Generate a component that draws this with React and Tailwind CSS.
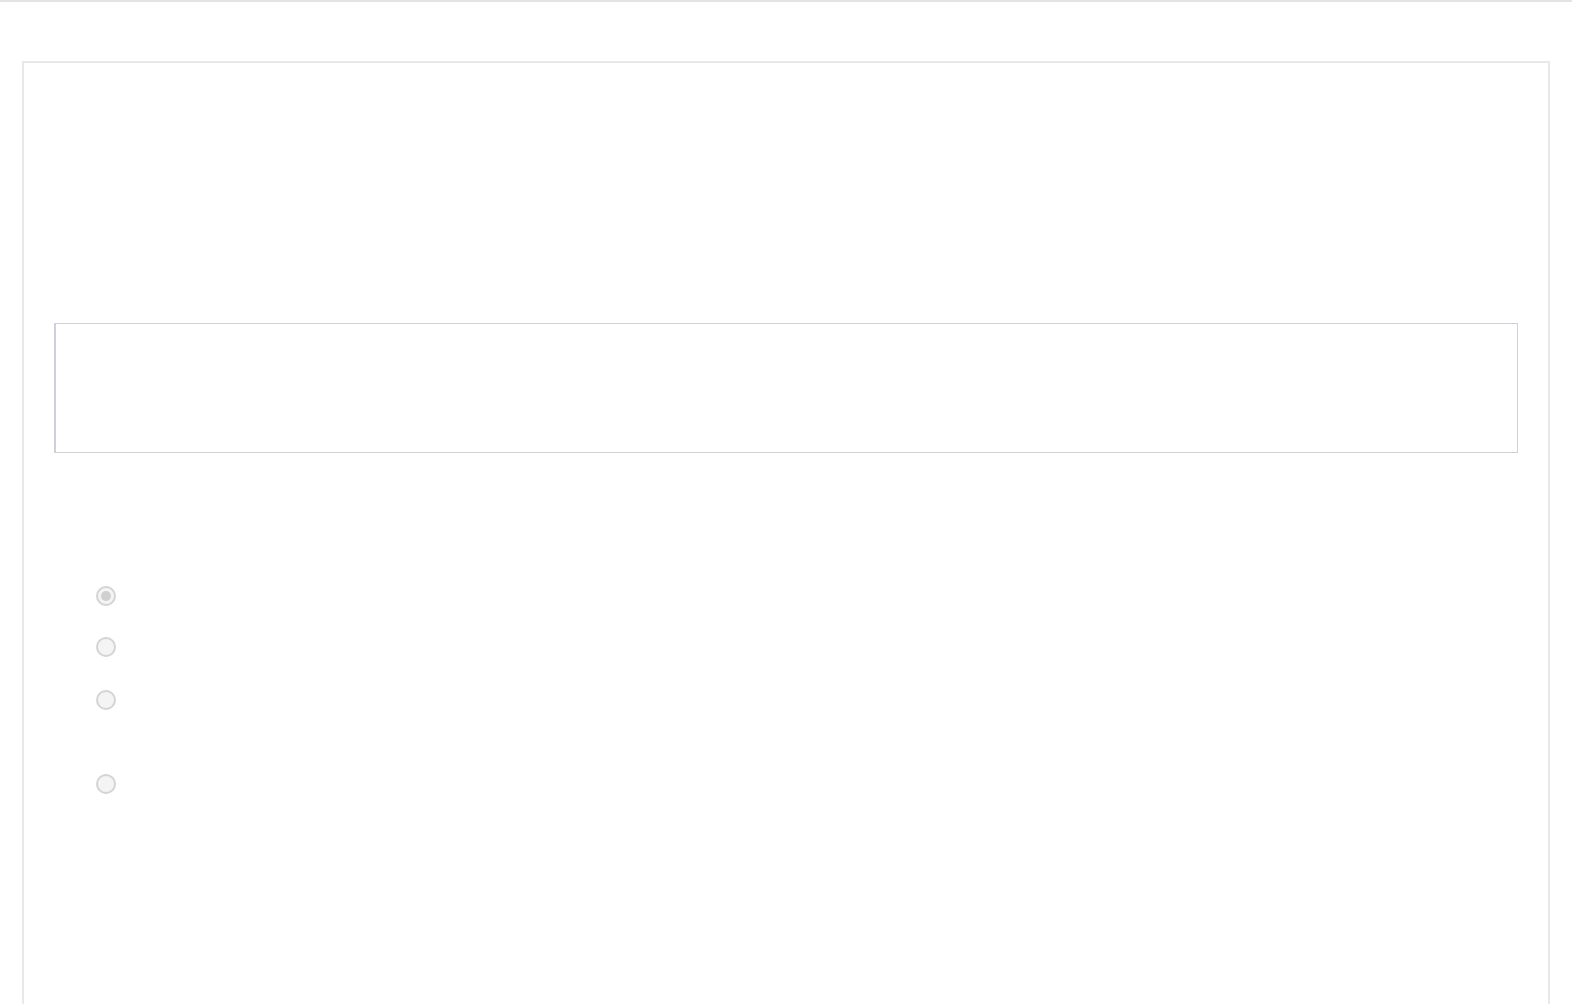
function Radio({ checked }) {
  return (
    <span className="flex h-5 w-5 items-center justify-center rounded-full border-2 border-[#d4d4d4] bg-[#f4f4f4]">
      {checked && <span className="h-[10px] w-[10px] rounded-full bg-[#cfcfcf]" />}
    </span>
  );
}

export default function App() {
  return (
    <div className="h-[1004px] overflow-hidden bg-white border-t-2 border-[#e6e2e2]" style={{ fontFamily: "'Liberation Sans', sans-serif" }}>
      <div className="px-[22px] pt-[59px]">
        <div className="h-[1000px] border-2 border-b-0 border-[#e8e8e8] px-[30px] pt-[260px]">
          <div className="h-[130px] w-[1464px] border border-l-2 border-[#cdd1d9] bg-white" />
          <div className="ml-[42px] mt-[133px] flex flex-col">
            <div className="h-[51px]"><Radio checked /></div>
            <div className="h-[53px]"><Radio /></div>
            <div className="h-[84px]"><Radio /></div>
            <div><Radio /></div>
          </div>
        </div>
      </div>
    </div>
  );
}
